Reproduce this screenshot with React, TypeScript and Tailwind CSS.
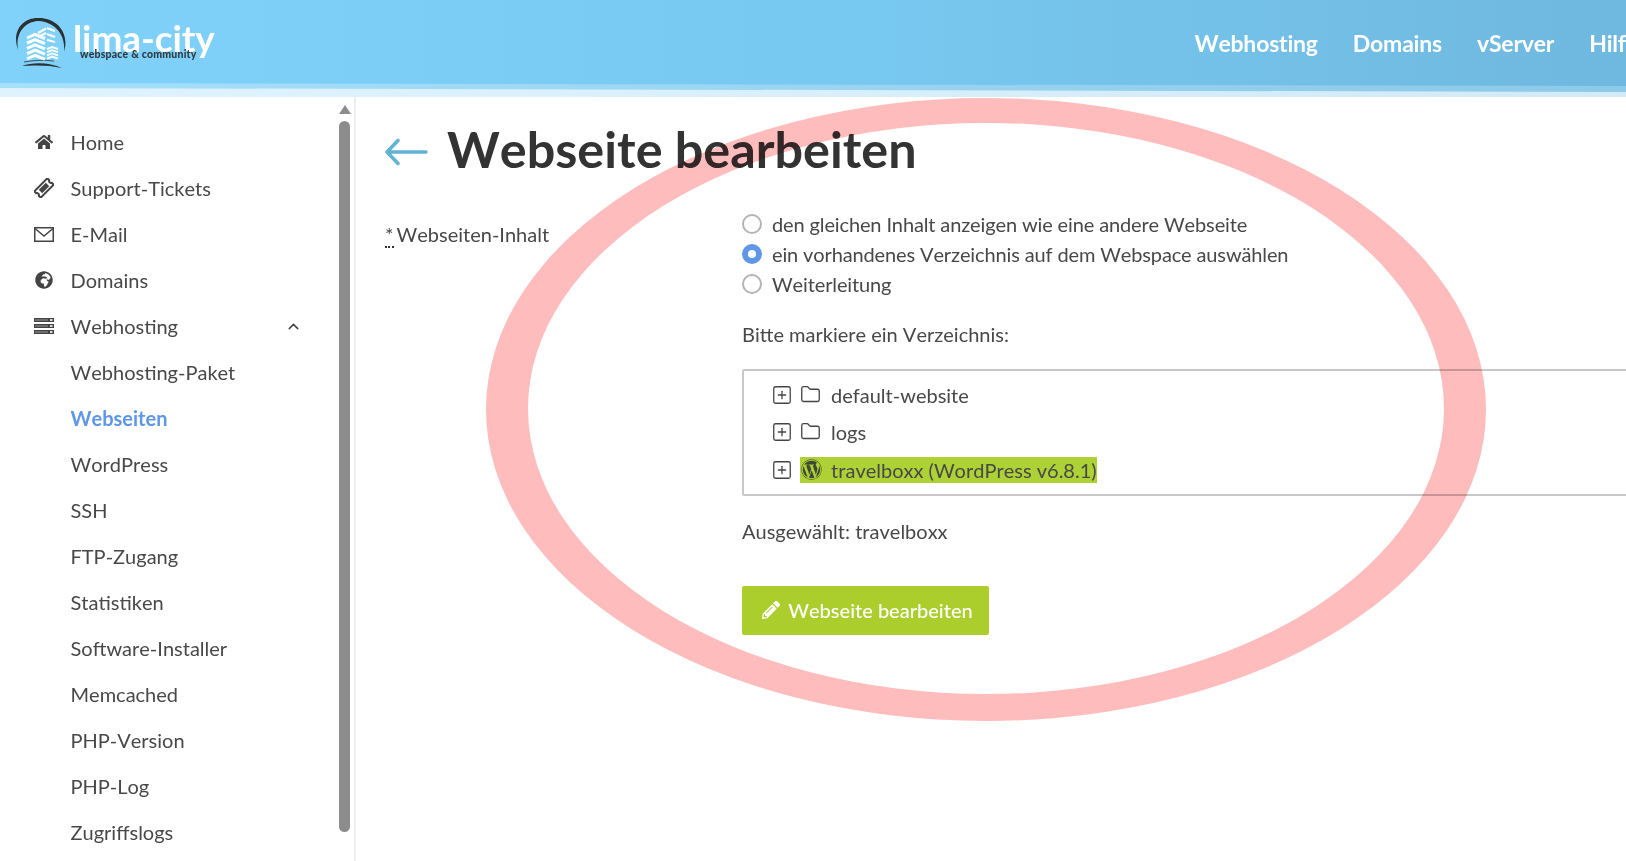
import { ChevronUp, Folder, SquarePlus } from "lucide-react";
import {
  FaGlobeAfrica,
  FaHome,
  FaPencilAlt,
  FaWordpress,
} from "react-icons/fa";
import type { ReactNode } from "react";

const TicketIcon = () => (
  <svg width="20" height="20" viewBox="0 0 20 20" fill="none">
    <g transform="rotate(-45 10 10)">
      <path d="M0.8 5.5H19.2V8.2C17.6 8.6 17.6 11.4 19.2 11.8V14.5H0.8V11.8C2.4 11.4 2.4 8.6 0.8 8.2Z" stroke="#444" strokeWidth="2" />
      <rect x="5" y="7.6" width="10" height="4.8" fill="#444" />
    </g>
  </svg>
);

const MailIcon = () => (
  <svg width="20" height="15" viewBox="0 0 20 15" fill="none">
    <rect x="0.75" y="0.75" width="18.5" height="13.5" stroke="#444" strokeWidth="1.5" />
    <path d="M1 1.5L10 9L19 1.5" stroke="#444" strokeWidth="1.5" />
  </svg>
);

const ServerIcon = () => (
  <svg width="20" height="16" viewBox="0 0 20 16" fill="none">
    <rect y="0" width="20" height="4" fill="#444" />
    <rect y="6" width="20" height="4" fill="#444" />
    <rect y="12" width="20" height="4" fill="#444" />
    <rect x="1" y="1.4" width="13" height="1.2" fill="#8a8a8a" />
    <rect x="1" y="7.4" width="13" height="1.2" fill="#8a8a8a" />
    <rect x="1" y="13.4" width="13" height="1.2" fill="#8a8a8a" />
    <rect x="16" y="1.2" width="2.5" height="1.6" fill="#fff" />
    <rect x="16" y="7.2" width="2.5" height="1.6" fill="#fff" />
    <rect x="16" y="13.2" width="2.5" height="1.6" fill="#fff" />
  </svg>
);

const BackArrow = () => (
  <svg width="44" height="30" viewBox="0 0 44 30" fill="none" className="-ml-[1px] shrink-0">
    <path d="M3 15H42M14 3.5L3 15L14 26.5" stroke="#62b2d8" strokeWidth="3.6" strokeLinecap="round" strokeLinejoin="round" />
  </svg>
);

// logo drawn in page coordinates, hence the odd viewBox
const LogoMark = () => (
  <svg width="56" height="56" viewBox="14 13 56 56" fill="none" className="shrink-0">
    <path d="M18 50C11 30 24 17 39 18C56 18 70 32 64 52C66 34 54 22 39 21C26 21 15 32 18 50Z" fill="#2b3033" />
    <path d="M22 66C32 62 50 62 62 68C50 65 34 65 22 66Z" fill="#2b3033" />
    <path d="M24 62C34 60 44 60 54 61" stroke="#2b3033" strokeWidth="0.8" />
    {[0, 1, 2, 3, 4].map((i) => (
      <path key={i} d={`M27 ${38 + i * 5.2}L35 ${34.5 + i * 5.2}L45 ${38.5 + i * 5.2}`} stroke="#fff" strokeWidth="3" />
    ))}
    <path d="M38 33L46 28.5M38 37L46 33M47 28L55 31M47 34L55 37M47 40L55 42" stroke="#fff" strokeWidth="2.2" />
    {[0, 1, 2, 3].map((i) => (
      <path key={i} d={`M47 ${49 + i * 3.2}L52 ${47 + i * 3.2}L58 ${49 + i * 3.2}`} stroke="#fff" strokeWidth="1.9" />
    ))}
  </svg>
);

const HeaderBands = () => (
  <svg width="1626" height="15" viewBox="0 0 1626 15" className="block">
    <defs>
      <linearGradient id="main">
        <stop offset="0" stopColor="#80d2fa" />
        <stop offset="0.5" stopColor="#78c9f2" />
        <stop offset="1" stopColor="#6fb8df" />
      </linearGradient>
      <linearGradient id="mid">
        <stop offset="0" stopColor="#a6e0fb" />
        <stop offset="1" stopColor="#8dc9e8" />
      </linearGradient>
      <linearGradient id="pale">
        <stop offset="0" stopColor="#def3fe" />
        <stop offset="1" stopColor="#d3ebf7" />
      </linearGradient>
    </defs>
    <rect width="1626" height="15" fill="url(#pale)" />
    <polygon points="0,0 1626,0 1626,10 0,6" fill="url(#mid)" />
    <polygon points="0,0 1626,0 1626,4 0,1" fill="url(#main)" />
  </svg>
);

const sideLinks: { label: string; icon?: ReactNode; active?: boolean; chevron?: boolean }[] = [
  { label: "Home", icon: <FaHome size={18} className="ml-[1px]" /> },
  { label: "Support-Tickets", icon: <TicketIcon /> },
  { label: "E-Mail", icon: <MailIcon /> },
  { label: "Domains", icon: <FaGlobeAfrica size={18} className="ml-[1px]" /> },
  { label: "Webhosting", icon: <ServerIcon />, chevron: true },
  { label: "Webhosting-Paket" },
  { label: "Webseiten", active: true },
  { label: "WordPress" },
  { label: "SSH" },
  { label: "FTP-Zugang" },
  { label: "Statistiken" },
  { label: "Software-Installer" },
  { label: "Memcached" },
  { label: "PHP-Version" },
  { label: "PHP-Log" },
  { label: "Zugriffslogs" },
  { label: "Fehlerlogs" },
];

const radios = [
  { label: "den gleichen Inhalt anzeigen wie eine andere Webseite" },
  { label: "ein vorhandenes Verzeichnis auf dem Webspace auswählen", checked: true },
  { label: "Weiterleitung" },
];

const App = () => {
  return (
    <div className="relative flex h-[861px] w-[1626px] flex-col overflow-hidden bg-white font-['Lato',sans-serif] text-[20px] text-[#484848] [font-kerning:none]">
      <header className="shrink-0">
        <div className="flex h-[82px] items-center justify-between bg-gradient-to-r from-[#80d2fa] via-[#78c9f2] to-[#6fb8df] pl-[14px]">
          <div className="flex items-center">
            <LogoMark />
            <div className="relative -mt-[6px] ml-[3px] h-[50px] w-[150px]">
              <span className="text-[37px] leading-[50px] font-bold tracking-[-0.1px] text-white">lima-city</span>
              <span className="absolute top-[35px] left-[7px] whitespace-nowrap text-[10.5px] leading-[12px] font-black tracking-[0.2px] text-[#2f3a40]">
                webspace &amp; community
              </span>
            </div>
          </div>
          <nav className="-mr-[12px] flex items-center gap-[35px] pt-[5px] text-[23px] font-bold tracking-[-0.2px] text-white">
            <span>Webhosting</span>
            <span>Domains</span>
            <span>vServer</span>
            <span>Hilfe</span>
          </nav>
        </div>
        <HeaderBands />
      </header>

      <main className="flex min-h-0 flex-1">
        <aside className="relative flex w-[356px] shrink-0 border-r-2 border-[#eeeeee]">
          <ul className="w-[339px] pt-[22px]">
            {sideLinks.map((link) => (
              <li key={link.label} className="flex h-[46px] items-center pl-[34px]">
                <span className="flex w-[36.5px] shrink-0 items-center text-[#444]">{link.icon}</span>
                <span className={link.active ? "font-bold text-[#5e97e8]" : ""}>{link.label}</span>
                {link.chevron && <ChevronUp size={17} className="mr-[37px] ml-auto text-[#444]" />}
              </li>
            ))}
          </ul>
          <div className="flex w-[11px] flex-col items-center pt-[8px]">
            <div className="h-0 w-0 border-x-[6px] border-b-[9px] border-x-transparent border-b-[#8c8c8c]" />
            <div className="mt-[7px] h-[711px] w-[11px] rounded-full bg-[#8c8c8c]" />
          </div>
        </aside>

        <section className="min-w-0 flex-1 pl-[29px]">
          <div className="flex h-[100px] items-center pt-[10px]">
            <BackArrow />
            <h1 className="-mt-[6px] ml-[19px] text-[50.3px] leading-none font-bold text-[#333]">Webseite bearbeiten</h1>
          </div>
          <div className="mt-[11px] flex">
            <div className="w-[357px] shrink-0 pt-[14px]">
              <div className="leading-[24px]">
                <abbr className="mr-[3px] border-b-2 border-dotted border-[#333] no-underline">*</abbr>
                Webseiten-Inhalt
              </div>
            </div>
            <div className="w-[1000px] shrink-0">
              <div className="flex flex-col pt-[1px]">
                {radios.map((radio) => (
                  <div key={radio.label} className="flex h-[30px] items-center">
                    {radio.checked ? (
                      <span className="flex h-[20px] w-[20px] items-center justify-center rounded-full bg-[#5e97e8]">
                        <span className="h-[8px] w-[8px] rounded-full bg-white" />
                      </span>
                    ) : (
                      <span className="h-[20px] w-[20px] rounded-full border-2 border-[#b4b4b4] bg-white" />
                    )}
                    <span className="ml-[10px] tracking-[-0.13px]">{radio.label}</span>
                  </div>
                ))}
              </div>
              <p className="mt-[20px] leading-[30px]">Bitte markiere ein Verzeichnis:</p>
              <div className="mt-[20px] h-[127px] rounded-[2px] border-2 border-[#c8c8c8] pt-[5px] pl-[30px]">
                <div className="flex h-[37px] items-center">
                  <SquarePlus size={22} strokeWidth={1.4} className="-ml-[3px] text-[#444]" />
                  <Folder size={21} strokeWidth={1.5} className="ml-[7px] text-[#444]" />
                  <span className="ml-[10px]">default-website</span>
                </div>
                <div className="flex h-[37px] items-center">
                  <SquarePlus size={22} strokeWidth={1.4} className="-ml-[3px] text-[#444]" />
                  <Folder size={21} strokeWidth={1.5} className="ml-[7px] text-[#444]" />
                  <span className="ml-[10px]">logs</span>
                </div>
                <div className="mt-[1px] flex h-[37px] items-center">
                  <SquarePlus size={22} strokeWidth={1.4} className="-ml-[3px] text-[#444]" />
                  <span className="ml-[7px] flex h-[26px] items-center bg-[#aed136] pl-[1px]">
                    <FaWordpress size={21} className="text-[#3f4a35]" />
                    <span className="ml-[9px]">travelboxx (WordPress v6.8.1)</span>
                  </span>
                </div>
              </div>
              <p className="mt-[21px] leading-[28px]">Ausgewählt: travelboxx</p>
              <button className="mt-[41px] flex h-[49px] w-[247px] items-center justify-center rounded-[2px] bg-[#abce2d] pb-[2px] pl-[4px] font-medium text-white">
                <FaPencilAlt size={18} />
                <span className="ml-[8px]">Webseite bearbeiten</span>
              </button>
            </div>
          </div>
        </section>
      </main>

      {/* marker ring over the page, thicker at the sides than top and bottom */}
      <svg className="pointer-events-none absolute top-[98px] left-[486px] mix-blend-multiply" width="1000" height="623" viewBox="0 0 1000 623">
        <path
          fillRule="evenodd"
          fill="#ffbcbc"
          d="M0 311.5a500 311.5 0 1 0 1000 0a500 311.5 0 1 0 -1000 0ZM42 310.5a458 285.5 0 1 0 916 0a458 285.5 0 1 0 -916 0Z"
        />
      </svg>
    </div>
  );
};

export default App;
